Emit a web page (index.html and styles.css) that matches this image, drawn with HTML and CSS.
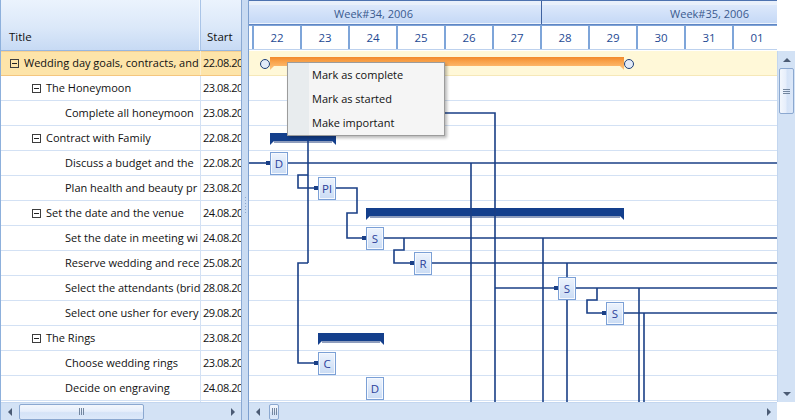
FILE: index.html
```html
<!DOCTYPE html>
<html>
<head>
<meta charset="utf-8">
<link rel="stylesheet" href="styles.css">
</head>
<body>
<div class="app">
  <div class="grid">
    <div class="grid-head">
      <div class="hcell col-title">Title</div>
      <div class="hcell col-start">Start</div>
    </div>
    <div class="grid-body">
      <div class="row sel"><div class="cell col-title lv0"><span class="exp"></span>Wedding day goals, contracts, and</div><div class="cell col-start">22.08.2006</div></div>
      <div class="row"><div class="cell col-title lv1"><span class="exp"></span>The Honeymoon</div><div class="cell col-start">23.08.2006</div></div>
      <div class="row"><div class="cell col-title lv2">Complete all honeymoon</div><div class="cell col-start">23.08.2006</div></div>
      <div class="row"><div class="cell col-title lv1"><span class="exp"></span>Contract with Family</div><div class="cell col-start">22.08.2006</div></div>
      <div class="row"><div class="cell col-title lv2">Discuss a budget and the</div><div class="cell col-start">22.08.2006</div></div>
      <div class="row"><div class="cell col-title lv2">Plan health and beauty pr</div><div class="cell col-start">23.08.2006</div></div>
      <div class="row"><div class="cell col-title lv1"><span class="exp"></span>Set the date and the venue</div><div class="cell col-start">24.08.2006</div></div>
      <div class="row"><div class="cell col-title lv2">Set the date in meeting wi</div><div class="cell col-start">24.08.2006</div></div>
      <div class="row"><div class="cell col-title lv2">Reserve wedding and rece</div><div class="cell col-start">25.08.2006</div></div>
      <div class="row"><div class="cell col-title lv2">Select the attendants (brid</div><div class="cell col-start">28.08.2006</div></div>
      <div class="row"><div class="cell col-title lv2">Select one usher for every</div><div class="cell col-start">29.08.2006</div></div>
      <div class="row"><div class="cell col-title lv1"><span class="exp"></span>The Rings</div><div class="cell col-start">23.08.2006</div></div>
      <div class="row"><div class="cell col-title lv2">Choose wedding rings</div><div class="cell col-start">23.08.2006</div></div>
      <div class="row"><div class="cell col-title lv2">Decide on engraving</div><div class="cell col-start">24.08.2006</div></div>
      <div class="row"><div class="cell col-title lv2"></div><div class="cell col-start"></div></div>
    </div>
    <div class="hscroll">
      <span class="arr arr-l"></span>
      <span class="hthumb wide"><span class="hgrip"></span></span>
      <span class="spacer"></span>
      <span class="arr arr-r"></span>
    </div>
  </div>

  <div class="splitter"><span class="sgrip"></span></div>

  <div class="gantt">
    <div class="timeline">
      <div class="weeks">
        <div class="week">Week#34, 2006</div>
        <div class="week">Week#35, 2006</div>
      </div>
      <div class="days">
        <div class="day">21</div><div class="day">22</div><div class="day">23</div><div class="day">24</div>
        <div class="day">25</div><div class="day">26</div><div class="day">27</div><div class="day">28</div>
        <div class="day">29</div><div class="day">30</div><div class="day">31</div><div class="day">01</div>
      </div>
    </div>
    <div class="corner"></div>

    <div class="chart">
      <div class="crow sel"></div><div class="crow"></div><div class="crow"></div><div class="crow"></div>
      <div class="crow"></div><div class="crow"></div><div class="crow"></div><div class="crow"></div>
      <div class="crow"></div><div class="crow"></div><div class="crow"></div><div class="crow"></div>
      <div class="crow"></div><div class="crow"></div><div class="crow"></div>
      <svg class="links" width="528" height="351" viewBox="0 0 528 351">
        <defs>
          <linearGradient id="org" x1="0" y1="0" x2="0" y2="1">
            <stop offset="0" stop-color="#f28a2c"/>
            <stop offset="0.35" stop-color="#f9a24a"/>
            <stop offset="1" stop-color="#ffc781"/>
          </linearGradient>
          <linearGradient id="bx" x1="0" y1="0" x2="0" y2="1">
            <stop offset="0" stop-color="#eef4fd"/>
            <stop offset="1" stop-color="#c9dbf4"/>
          </linearGradient>
        </defs>
        <!-- summary bar of the root task -->
        <polygon points="21,6 375,6 375,19 371,15 25,15 21,19" fill="url(#org)"/>
        <circle cx="16" cy="13" r="4.5" fill="#e3ebf8" stroke="#1f3f78" stroke-width="1"/>
        <circle cx="380" cy="13" r="4.5" fill="#e3ebf8" stroke="#1f3f78" stroke-width="1"/>

        <!-- summary bars -->
        <g fill="#143f8c">
          <polygon points="21,82 87,82 87,94 83,90 25,90 21,94"/>
          <polygon points="117,157 375,157 375,169 371,165 121,165 117,169"/>
          <polygon points="69,282 135,282 135,294 131,290 73,290 69,294"/>
        </g>
        <g fill="#8e9dbd">
          <rect x="25" y="90" width="58" height="2"/>
          <rect x="121" y="165" width="250" height="2"/>
          <rect x="73" y="290" width="58" height="2"/>
        </g>

        <!-- connectors -->
        <g fill="none" stroke="#1a3f86" stroke-width="1.6">
          <path d="M86 62 H246 V351"/>
          <path d="M59 62 V212"/>
          <path d="M59 124 H49 V137 H69"/>
          <path d="M59 212 H49 V312 H69"/>
          <path d="M0 112 H21"/>
          <path d="M38 112 H528"/>
          <path d="M222 112 V351"/>
          <path d="M86 137 H108 V162 H98 V187 H117"/>
          <path d="M134 187 H528"/>
          <path d="M155 187 V199 H145 V212 H165"/>
          <path d="M182 212 H528"/>
          <path d="M294 187 V351"/>
          <path d="M318 212 V351"/>
          <path d="M246 237 H309"/>
          <path d="M326 237 H528"/>
          <path d="M348 237 V249 H338 V262 H357"/>
          <path d="M374 262 H528"/>
          <path d="M390 237 V351"/>
          <path d="M395 262 V351"/>
        </g>
        <g fill="#1a3f86">
          <rect x="17" y="110" width="4" height="4"/>
          <rect x="65" y="135" width="4" height="4"/>
          <rect x="113" y="185" width="4" height="4"/>
          <rect x="161" y="210" width="4" height="4"/>
          <rect x="305" y="235" width="4" height="4"/>
          <rect x="353" y="260" width="4" height="4"/>
          <rect x="65" y="310" width="4" height="4"/>
        </g>

        <!-- task boxes -->
        <g class="box">
          <rect x="69.5" y="51.5" width="17" height="22" fill="url(#bx)" stroke="#7ba0d6"/>
          <rect x="21.5" y="101.5" width="17" height="22" fill="url(#bx)" stroke="#7ba0d6"/>
          <rect x="22.5" y="102.5" width="15" height="20" fill="none" stroke="#f6f9fe"/>
          <text x="30" y="116.5">D</text>
          <rect x="69.5" y="126.5" width="17" height="22" fill="url(#bx)" stroke="#7ba0d6"/>
          <rect x="70.5" y="127.5" width="15" height="20" fill="none" stroke="#f6f9fe"/>
          <text x="78" y="141.5">Pl</text>
          <rect x="117.5" y="176.5" width="17" height="22" fill="url(#bx)" stroke="#7ba0d6"/>
          <rect x="118.5" y="177.5" width="15" height="20" fill="none" stroke="#f6f9fe"/>
          <text x="126" y="191.5">S</text>
          <rect x="165.5" y="201.5" width="17" height="22" fill="url(#bx)" stroke="#7ba0d6"/>
          <rect x="166.5" y="202.5" width="15" height="20" fill="none" stroke="#f6f9fe"/>
          <text x="174" y="216.5">R</text>
          <rect x="309.5" y="226.5" width="17" height="22" fill="url(#bx)" stroke="#7ba0d6"/>
          <rect x="310.5" y="227.5" width="15" height="20" fill="none" stroke="#f6f9fe"/>
          <text x="318" y="241.5">S</text>
          <rect x="357.5" y="251.5" width="17" height="22" fill="url(#bx)" stroke="#7ba0d6"/>
          <rect x="358.5" y="252.5" width="15" height="20" fill="none" stroke="#f6f9fe"/>
          <text x="366" y="266.5">S</text>
          <rect x="69.5" y="301.5" width="17" height="22" fill="url(#bx)" stroke="#7ba0d6"/>
          <rect x="70.5" y="302.5" width="15" height="20" fill="none" stroke="#f6f9fe"/>
          <text x="78" y="316.5">C</text>
          <rect x="117.5" y="326.5" width="17" height="22" fill="url(#bx)" stroke="#7ba0d6"/>
          <rect x="118.5" y="327.5" width="15" height="20" fill="none" stroke="#f6f9fe"/>
          <text x="126" y="341.5">D</text>
        </g>
      </svg>
    </div>
    <div class="vscroll">
      <span class="arr arr-u"></span>
      <span class="vthumb"><span class="vgrip"></span></span>
      <span class="spacer"></span>
      <span class="arr arr-d"></span>
    </div>

    <div class="hscroll gscroll">
      <span class="arr arr-l"></span>
      <span class="hthumb small"><span class="hgrip"></span></span>
      <span class="spacer"></span>
      <span class="arr arr-r"></span>
    </div>
    <div class="corner"></div>
  </div>

  <div class="menu">
    <div class="mitem">Mark as complete</div>
    <div class="mitem">Mark as started</div>
    <div class="mitem">Make important</div>
  </div>
</div>
</body>
</html>
```
FILE: styles.css
```css
* { box-sizing: border-box; }
html, body { margin: 0; padding: 0; }
body {
  width: 795px;
  height: 420px;
  overflow: hidden;
  background: #fff;
  font-family: "Open Sans", "Noto Sans", sans-serif;
  font-size: 11px;
  color: #111;
}
.app {
  position: relative;
  display: flex;
  width: 795px;
  height: 420px;
}

/* ---------- left grid ---------- */
.grid {
  width: 241px;
  flex: none;
  display: flex;
  flex-direction: column;
  border-left: 1px solid #8db0dc;
}
.grid-head {
  height: 51px;
  flex: none;
  display: flex;
  background: linear-gradient(#ebf3fd 0%, #dbe8f9 55%, #c7daf4 100%);
  border-bottom: 1px solid #97b7e1;
}
.hcell {
  display: flex;
  align-items: flex-end;
  padding-bottom: 5px;
  line-height: 16px;
  font-size: 11.5px;
  color: #111;
  white-space: nowrap;
  overflow: hidden;
}
.hcell.col-title { padding-left: 8px; border-right: 1px solid #a9c4e7; box-shadow: inset -1px 0 #f3f8fe; }
.hcell.col-start { padding-left: 6px; }
.col-title { width: 200px; flex: none; }
.col-start { width: 40px; flex: none; }

.grid-body {
  height: 351px;
  flex: none;
  overflow: hidden;
}
.row {
  display: flex;
  height: 25px;
  border-bottom: 1px solid #d3e1f4;
}
.row.sel {
  background: #fde4a9;
  border-bottom-color: #f4c67f;
  box-shadow: inset 0 1px #f6cf8f;
}
.cell {
  display: flex;
  align-items: center;
  white-space: nowrap;
  overflow: hidden;
  line-height: 24px;
}
.cell.col-title { border-right: 1px solid #d3e1f4; }
.row.sel .cell.col-title { border-right-color: #fbeed0; }
.cell.col-start { padding-left: 2px; letter-spacing: -0.45px; }
.lv0 { padding-left: 9px; }
.lv1 { padding-left: 31px; }
.lv2 { padding-left: 64px; }
.exp {
  position: relative;
  width: 9px;
  height: 9px;
  flex: none;
  margin-right: 5px;
  border: 1px solid #3d3d3d;
}
.exp::after {
  content: "";
  position: absolute;
  left: 1px;
  right: 1px;
  top: 3px;
  height: 1px;
  background: #222;
}

/* ---------- scrollbars ---------- */
.hscroll {
  height: 18px;
  flex: none;
  display: flex;
  align-items: center;
  background: #d3e2f5;
  border-top: 1px solid #c3d6ef;
}
.spacer { flex: 1; }
.arr {
  width: 17px;
  height: 17px;
  flex: none;
  display: flex;
  align-items: center;
  justify-content: center;
}
.arr::after { content: ""; width: 0; height: 0; }
.arr-l::after { border-top: 4px solid transparent; border-bottom: 4px solid transparent; border-right: 4px solid #4b5b74; }
.arr-r::after { border-top: 4px solid transparent; border-bottom: 4px solid transparent; border-left: 4px solid #4b5b74; }
.arr-u::after { border-left: 4px solid transparent; border-right: 4px solid transparent; border-bottom: 4px solid #4b5b74; }
.arr-d::after { border-left: 4px solid transparent; border-right: 4px solid transparent; border-top: 4px solid #4b5b74; }

.hthumb {
  height: 16px;
  flex: none;
  display: flex;
  align-items: center;
  justify-content: center;
  border: 1px solid #8ba8d0;
  border-radius: 2px;
  background: linear-gradient(#f3f7fd 0%, #e6eefb 45%, #d5e3f7 55%, #dce8f9 100%);
}
.hthumb.wide { width: 125px; margin-left: 1px; }
.hthumb.small { width: 10px; margin-left: 3px; }
.hgrip {
  width: 5px;
  height: 7px;
  border-left: 1px solid #73869f;
  border-right: 1px solid #73869f;
  position: relative;
}
.hgrip::after {
  content: "";
  position: absolute;
  left: 1px;
  top: 0;
  width: 1px;
  height: 7px;
  background: #73869f;
}

.vscroll {
  display: flex;
  flex-direction: column;
  align-items: center;
  background: #d3e2f5;
  border-left: 1px solid #c3d6ef;
}
.vthumb {
  width: 15px;
  height: 46px;
  flex: none;
  display: flex;
  align-items: center;
  justify-content: center;
  border: 1px solid #8ba8d0;
  border-radius: 2px;
  background: linear-gradient(to right, #f3f7fd 0%, #e6eefb 45%, #d5e3f7 55%, #dce8f9 100%);
}
.vgrip {
  width: 7px;
  height: 5px;
  border-top: 1px solid #73869f;
  border-bottom: 1px solid #73869f;
  position: relative;
}
.vgrip::after {
  content: "";
  position: absolute;
  left: 0;
  top: 1px;
  height: 1px;
  width: 7px;
  background: #73869f;
}

/* ---------- splitter ---------- */
.splitter {
  width: 8px;
  flex: none;
  display: flex;
  align-items: center;
  justify-content: center;
  background: #c9dbf2;
  border-left: 1px solid #8aa9d3;
  border-right: 1px solid #7c9fcf;
}
.sgrip {
  width: 1px;
  height: 16px;
  margin-top: -10px;
  background: repeating-linear-gradient(#8ca6cc 0 1px, transparent 1px 3px);
}

/* ---------- gantt ---------- */
.gantt {
  width: 546px;
  flex: none;
  display: grid;
  grid-template-columns: 528px 18px;
  grid-template-rows: 51px 351px 18px;
}
.corner { background: #fff; }
.timeline {
  overflow: hidden;
  border-top: 1px solid #4d72b0;
  background: #fff;
}
.weeks {
  height: 24px;
  display: flex;
  margin-left: -43px;
  padding-top: 4px;
  background: linear-gradient(#e9f0fb 0, #e9f0fb 4px, #dce8fb 4px, #c4d8f6 100%);
  border-bottom: 1px solid #5f86c4;
  box-shadow: inset 0 -1px #eef4fd;
}
.week {
  width: 336px;
  flex: none;
  text-align: center;
  line-height: 18px;
  font-size: 11px;
  color: #3a5a8f;
  border-right: 1px solid #3f62a0;
  margin-top: -4px;
  padding-top: 4px;
}
.days {
  height: 25px;
  display: flex;
  margin-left: -43px;
  border-top: 1px solid #7ea3d7;
  border-bottom: 1px solid #bcd1ee;
}
.day {
  width: 48px;
  flex: none;
  text-align: center;
  line-height: 23px;
  font-size: 11.5px;
  color: #1f4a94;
  border-right: 2px solid #7ea5d9;
}

.chart {
  position: relative;
  overflow: hidden;
  background: #fff;
}
.crow {
  height: 25px;
  border-bottom: 1px solid #d3e1f4;
}
.crow.sel {
  background: #fff8d8;
  border-bottom-color: #f6e8b8;
}
.links {
  position: absolute;
  left: 0;
  top: 0;
}
.box text {
  font-family: "Open Sans", "Noto Sans", sans-serif;
  font-size: 11.5px;
  fill: #2b409a;
  text-anchor: middle;
}

/* ---------- context menu ---------- */
.menu {
  position: absolute;
  left: 287px;
  top: 62px;
  width: 158px;
  height: 74px;
  border: 1px solid #9c9c9c;
  background: linear-gradient(to right, #e8ecee 0, #e8ecee 21px, #f5f5f5 21px);
  box-shadow: 2px 2px 3px rgba(0, 0, 0, 0.28);
}
.mitem {
  height: 24px;
  line-height: 24px;
  padding-left: 24px;
  font-size: 11px;
  color: #111;
  white-space: nowrap;
}
```
